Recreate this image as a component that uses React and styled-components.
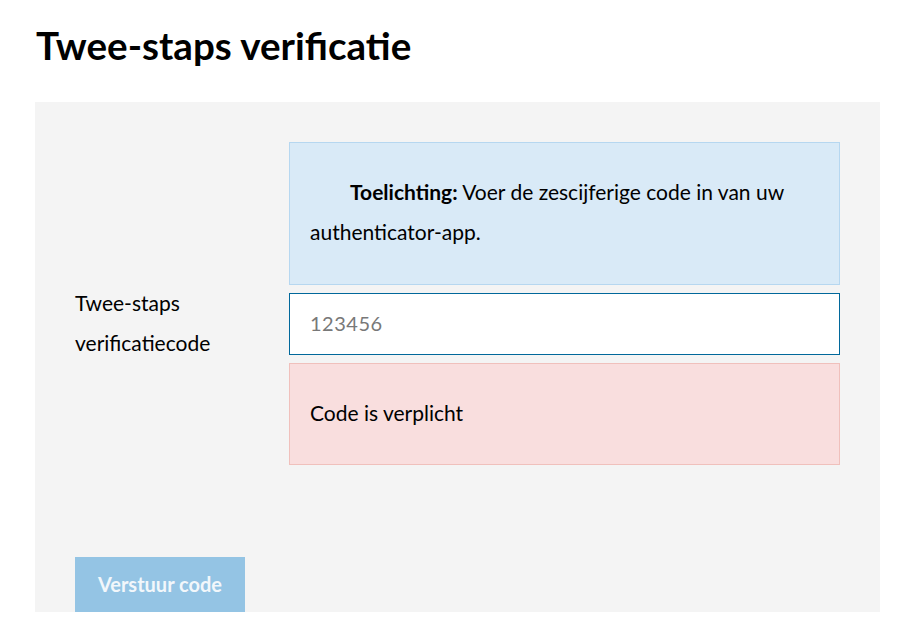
import React, { useState } from 'react'
import styled, { createGlobalStyle } from 'styled-components'

const GlobalStyle = createGlobalStyle`
    body {
        margin: 0;
        background: #fff;
        font-family: Lato, "Liberation Sans", sans-serif;
        color: #000;
    }
`

const App = () => {
    const [code, setCode] = useState('')
    const [submitted] = useState(true)

    /* FORM SUBMIT */

    const formSubmit = e => {
        e.preventDefault()
    }

    return (
        <Page>
            <GlobalStyle />
            <Headline>Twee-staps verificatie</Headline>
            <Panel onSubmit={formSubmit}>
                <FieldGrid>
                    <Spacer />
                    <InfoBox>
                        <strong>Toelichting:</strong> Voer de zescijferige code in van uw authenticator-app.
                    </InfoBox>

                    <Label htmlFor='code'>Twee-staps verificatiecode</Label>
                    <Input
                        id='code'
                        name='code'
                        placeholder='123456'
                        value={code}
                        onChange={e => setCode(e.target.value)}
                        type='text'
                    />

                    <Spacer />
                    {submitted && !code && <ErrorBox>Code is verplicht</ErrorBox>}
                </FieldGrid>
                <Button type='submit' disabled={!code}>Verstuur code</Button>
            </Panel>
        </Page>
    )
}

const Page = styled.div`
    padding: 0 25px 0 35px;
`

const Headline = styled.h1`
    font-size: 38.6px;
    font-weight: 700;
    margin: 0;
    padding: 20px 0 0 1px;
    line-height: 50px;
    height: 82px;
`

const Panel = styled.form`
    background: #f4f4f4;
    padding: 40px 40px 0;
    height: 510px;
    box-sizing: border-box;
    display: flex;
    flex-direction: column;
    align-items: flex-start;
`

const FieldGrid = styled.div`
    display: grid;
    grid-template-columns: 214px 551px;
    row-gap: 8px;
    align-items: center;
`

const Spacer = styled.div``

const InfoBox = styled.div`
    background: #d9eaf7;
    border: 1px solid #b6d7f0;
    height: 143px;
    box-sizing: border-box;
    padding: 29px 20px 0;
    font-size: 21px;
    line-height: 40px;
    text-indent: 40px;
    strong {
        font-weight: 700;
    }
`

const Label = styled.label`
    font-size: 21px;
    line-height: 40px;
    padding-right: 60px;
    margin: -10px 0 -8px;
`

const Input = styled.input`
    height: 62px;
    box-sizing: border-box;
    border: 1px solid #01689b;
    background: #fff;
    padding: 0 20px 2px;
    font-family: Lato, "Liberation Sans", sans-serif;
    font-size: 20px;
    outline: none;
    &::placeholder {
        color: #787878;
        letter-spacing: 0.5px;
    }
`

const ErrorBox = styled.div`
    background: #f9dede;
    border: 1px solid #f0c0bc;
    height: 102px;
    box-sizing: border-box;
    padding: 0 20px 4px;
    display: flex;
    align-items: center;
    font-size: 21px;
`

const Button = styled.button`
    margin-top: auto;
    height: 55px;
    width: 170px;
    border: none;
    background: #94c4e4;
    color: #f2f7fb;
    font-family: Lato, "Liberation Sans", sans-serif;
    font-size: 20px;
    font-weight: 700;
    padding-bottom: 2px;
    cursor: not-allowed;
`

export default App
